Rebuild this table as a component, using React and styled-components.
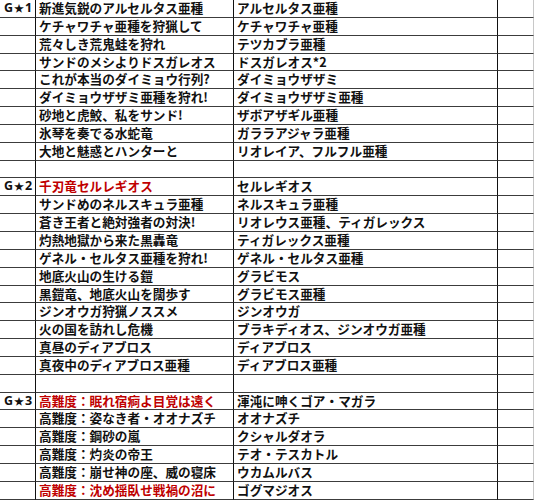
import React from "react";
import styled, { createGlobalStyle } from "styled-components";

const Global = createGlobalStyle`
  html, body { margin: 0; padding: 0; background: #fff; }
  body { font-family: "Noto Sans CJK JP", "Noto Sans", sans-serif; }
`;

const ROW_H = 500 / 28;

const Sheet = styled.div`
  display: grid;
  grid-template-columns: 36px 198px 264px 36px;
  grid-auto-rows: ${ROW_H}px;
  width: 534px;
  height: 500px;
  overflow: hidden;
`;

const Cell = styled.div`
  box-sizing: border-box;
  border-bottom: 1px solid #3c3c3c;
  border-right: 1px solid ${(p) => (p.$last ? "#c8c8c8" : "#111")};
  padding-left: ${(p) => (p.$grade ? "4px" : "3px")};
  display: flex;
  align-items: center;
  white-space: nowrap;
  min-width: 0;
  font-family: ${(p) =>
    p.$grade
      ? '"Open Sans", "Noto Sans CJK JP", sans-serif'
      : '"Noto Sans CJK JP", sans-serif'};
  font-weight: 700;
  font-size: ${(p) => (p.$grade ? "12.5px" : "12.65px")};
  line-height: ${ROW_H - 1}px;
  color: ${(p) => (p.$red ? "#c00000" : "#111")};
`;

const Star = styled.span`
  font-size: 10px;
  margin: 0 1px;
`;

const rows = [
  ["G1", "新進気鋭のアルセルタス亜種", "アルセルタス亜種"],
  ["", "ケチャワチャ亜種を狩猟して", "ケチャワチャ亜種"],
  ["", "荒々しき荒鬼蛙を狩れ", "テツカブラ亜種"],
  ["", "サンドのメシよりドスガレオス", "ドスガレオス*2"],
  ["", "これが本当のダイミョウ行列?", "ダイミョウザザミ"],
  ["", "ダイミョウザザミ亜種を狩れ!", "ダイミョウザザミ亜種"],
  ["", "砂地と虎鮫、私をサンド!", "ザボアザギル亜種"],
  ["", "氷琴を奏でる水蛇竜", "ガララアジャラ亜種"],
  ["", "大地と魅惑とハンターと", "リオレイア、フルフル亜種"],
  ["", "", ""],
  ["G2", "千刃竜セルレギオス", "セルレギオス", true],
  ["", "サンドめのネルスキュラ亜種", "ネルスキュラ亜種"],
  ["", "蒼き王者と絶対強者の対決!", "リオレウス亜種、ティガレックス"],
  ["", "灼熱地獄から来た黒轟竜", "ティガレックス亜種"],
  ["", "ゲネル・セルタス亜種を狩れ!", "ゲネル・セルタス亜種"],
  ["", "地底火山の生ける鎧", "グラビモス"],
  ["", "黒鎧竜、地底火山を闊歩す", "グラビモス亜種"],
  ["", "ジンオウガ狩猟ノススメ", "ジンオウガ"],
  ["", "火の国を訪れし危機", "ブラキディオス、ジンオウガ亜種"],
  ["", "真昼のディアブロス", "ディアブロス"],
  ["", "真夜中のディアブロス亜種", "ディアブロス亜種"],
  ["", "", ""],
  ["G3", "高難度：眠れ宿痾よ目覚は遠く", "渾沌に呻くゴア・マガラ", true],
  ["", "高難度：姿なき者・オオナズチ", "オオナズチ"],
  ["", "高難度：鋼砂の嵐", "クシャルダオラ"],
  ["", "高難度：灼炎の帝王", "テオ・テスカトル"],
  ["", "高難度：崩せ神の座、威の寝床", "ウカムルバス"],
  ["", "高難度：沈め揺臥せ戦禍の沼に", "ゴグマジオス", true],
];

function Grade({ g }) {
  if (!g) return null;
  return (
    <>
      G<Star>★</Star>
      {g.slice(1)}
    </>
  );
}

export default function App() {
  return (
    <>
      <Global />
      <Sheet>
        {rows.map(([g, quest, target, red], i) => (
          <React.Fragment key={i}>
            <Cell $grade>
              <Grade g={g} />
            </Cell>
            <Cell $red={red}>{quest}</Cell>
            <Cell>{target}</Cell>
            <Cell $last />
          </React.Fragment>
        ))}
      </Sheet>
    </>
  );
}
